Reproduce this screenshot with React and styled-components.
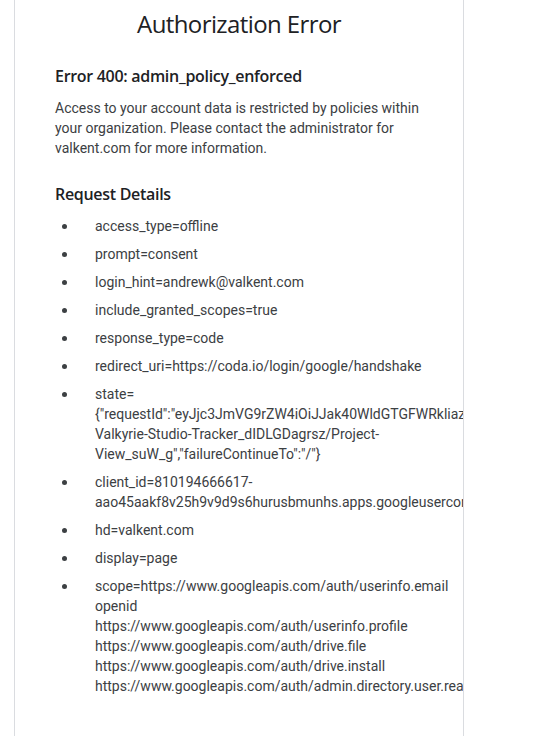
import styled, { createGlobalStyle } from "styled-components";

// Global
const GlobalStyle = createGlobalStyle`
  html, body {
    margin: 0;
    padding: 0;
    background: #ffffff;
  }
  body {
    font-family: Roboto, "Noto Sans", Arial, sans-serif;
    color: #202124;
  }
`;

// Style
const Page = styled.div`
  padding-left: 14px;
  min-height: 736px;
`;

const Card = styled.main`
  box-sizing: border-box;
  width: 450px;
  min-height: 736px;
  border-left: 1px solid #dadce0;
  border-right: 1px solid #dadce0;
  padding: 8px 40px 40px;
  overflow: hidden;
`;

const Title = styled.h1`
  margin: 0 -40px 24px;
  font-family: "Open Sans", Roboto, sans-serif;
  font-size: 24px;
  font-weight: 400;
  line-height: 32px;
  letter-spacing: -0.6px;
  text-align: center;
  color: #202124;
`;

const H2 = styled.h2`
  margin: 0 0 10px;
  font-family: "Open Sans", Roboto, sans-serif;
  font-size: 16px;
  font-weight: 600;
  line-height: 24px;
  letter-spacing: -0.3px;
  color: #202124;
`;

const Text = styled.p`
  margin: 0 0 24px;
  font-size: 14px;
  line-height: 20px;
  color: #3c4043;
`;

const List = styled.ul`
  list-style: none;
  margin: 8px 0 0;
  padding: 0;
  display: flex;
  flex-direction: column;
  gap: 8px;
`;

const Item = styled.li`
  display: grid;
  grid-template-columns: 40px auto;
  font-size: 14px;
  line-height: 20px;
  color: #3c4043;
`;

const Bullet = styled.span`
  width: 5px;
  height: 5px;
  margin: 8px 0 0 7px;
  border-radius: 50%;
  background: #3c4043;
`;

const Lines = styled.div`
  display: flex;
  flex-direction: column;
`;

const Line = styled.span`
  white-space: nowrap;
`;

const details = [
  ["access_type=offline"],
  ["prompt=consent"],
  ["login_hint=andrewk@valkent.com"],
  ["include_granted_scopes=true"],
  ["response_type=code"],
  ["redirect_uri=https://coda.io/login/google/handshake"],
  [
    "state=",
    '{"requestId":"eyJjc3JmVG9rZW4iOiJJak40WldGTGFWRkliazRuZjJ6cG0xM3lHMnh1cGlq","continueTo":"/d/',
    "Valkyrie-Studio-Tracker_dIDLGDagrsz/Project-",
    'View_suW_g","failureContinueTo":"/"}',
  ],
  [
    "client_id=810194666617-",
    "aao45aakf8v25h9v9d9s6hurusbmunhs.apps.googleusercontent.com",
  ],
  ["hd=valkent.com"],
  ["display=page"],
  [
    "scope=https://www.googleapis.com/auth/userinfo.email",
    "openid",
    "https://www.googleapis.com/auth/userinfo.profile",
    "https://www.googleapis.com/auth/drive.file",
    "https://www.googleapis.com/auth/drive.install",
    "https://www.googleapis.com/auth/admin.directory.user.readonly",
  ],
];

function App() {
  return (
    <Page>
      <GlobalStyle />
      <Card>
        <Title>Authorization Error</Title>

        {/* Error */}
        <H2>Error 400: admin_policy_enforced</H2>
        <Text>
          Access to your account data is restricted by policies within your
          organization. Please contact the administrator for valkent.com for
          more information.
        </Text>

        {/* Request details */}
        <H2>Request Details</H2>
        <List>
          {details.map((lines, i) => (
            <Item key={i}>
              <Bullet />
              <Lines>
                {lines.map((line, j) => (
                  <Line key={j}>{line}</Line>
                ))}
              </Lines>
            </Item>
          ))}
        </List>
      </Card>
    </Page>
  );
}

export default App;
